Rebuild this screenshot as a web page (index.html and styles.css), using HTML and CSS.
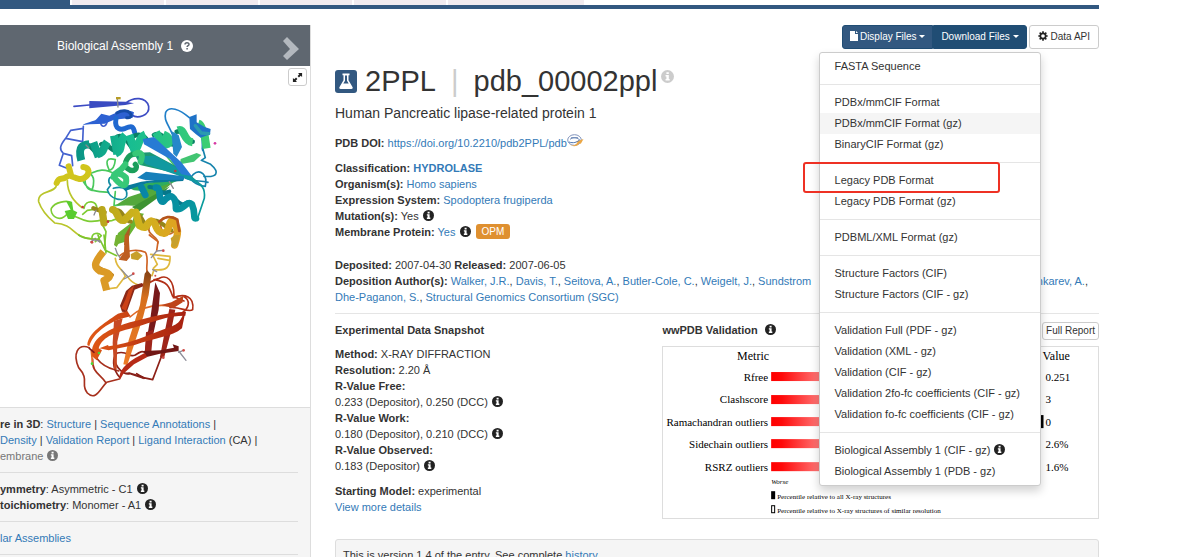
FILE: index.html
```html
<!DOCTYPE html>
<html lang="en">
<head>
    <meta charset="UTF-8">
    <meta name="viewport" content="width=device-width, initial-scale=1.0">
    <title>RCSB PDB - 2PPL: Human Pancreatic lipase-related protein 1</title>
    <link rel="stylesheet" href="styles.css">
</head>
<body>

<!-- shared icons -->
<svg class="sprite" aria-hidden="true">
    <symbol id="info" viewBox="0 0 12 12">
        <circle cx="6" cy="6" r="6" fill="currentColor"/>
        <path d="M5 2h2.200v1.700H5zM4.200 4.700h3v3.600h.8v1.400H4.200V8.300H5V6h-.8z" fill="#fff"/>
    </symbol>
</svg>

<header class="tabs">
    <span class="tab active"></span>
    <span class="tab"></span>
    <span class="tab"></span>
    <span class="tab"></span>
    <span class="tab"></span>
    <span class="tab wide"></span>
</header>

<div class="page">
    <aside class="sidebar">
        <div class="carousel-header">
            <span>Biological Assembly 1</span>
            <svg class="help" viewBox="0 0 12 12"><circle cx="6" cy="6" r="6" fill="#fff"/><path d="M4 4.600C4 2.200 8 2.200 8 4.400c0 1.300-1.900 1.300-1.900 2.600M6.100 8v1.500" fill="none" stroke="#5f6770" stroke-width="1.500"/></svg>
            <button class="next" aria-label="Next"><svg viewBox="0 0 16 24"><path d="M0 4l4-4 12 12L4 23l-4-4 7-7z" fill="#b3b8be"/></svg></button>
        </div>
        <div class="viewer">
            <button class="expand" aria-label="Expand"><svg viewBox="0 0 12 12"><path d="M6.500 1H11v4.500L9.500 4 7.600 5.900 6.100 4.400 8 2.500zM1 6.500L2.500 8l1.900-1.900 1.500 1.500L4 9.500 5.500 11H1z" fill="#222"/></svg></button>
            <svg class="protein" viewBox="0 66 310 341">
                <defs>
                    <linearGradient id="gHelix" x1="235" y1="0" x2="630" y2="0" gradientUnits="userSpaceOnUse"><stop offset="0" stop-color="#0a9485"/><stop offset=".4" stop-color="#18bd91"/><stop offset="1" stop-color="#3dce72"/></linearGradient>
                    <linearGradient id="gGold" x1="290" y1="0" x2="540" y2="0" gradientUnits="userSpaceOnUse"><stop offset="0" stop-color="#b6a51b"/><stop offset=".5" stop-color="#cdb31d"/><stop offset="1" stop-color="#e1a222"/></linearGradient>
                    <linearGradient id="gTeal" x1="420" y1="260" x2="600" y2="390" gradientUnits="userSpaceOnUse"><stop offset="0" stop-color="#0781a8"/><stop offset="1" stop-color="#07999d"/></linearGradient>
                    <linearGradient id="gRed" x1="260" y1="0" x2="560" y2="0" gradientUnits="userSpaceOnUse"><stop offset="0" stop-color="#e25b16"/><stop offset="1" stop-color="#a62011"/></linearGradient>
                    <linearGradient id="gOrange" x1="0" y1="120" x2="0" y2="390" gradientUnits="userSpaceOnUse"><stop offset="0" stop-color="#8d4615"/><stop offset=".25" stop-color="#d66f1d"/><stop offset="1" stop-color="#ed7a25"/></linearGradient>
                </defs>

                <!-- catalytic domain -->
                <g transform="translate(0 85) scale(.3333)" fill="none" stroke-linecap="round" stroke-linejoin="round">
                    <!-- thin loops -->
                    <g stroke-width="5">
                        <path stroke="#3d4cc4" d="M222 64L268 60M378 54C400 36 438 34 446 64C450 92 412 102 396 90"/>
                        <path stroke="#4462cf" d="M300 108C305 132 318 126 322 108M250 124L248 170L197 160L212 136L250 130M197 160C178 184 178 194 190 205L215 212L218 242M190 205L178 241L201 250"/>
                        <path stroke="#207fc9" d="M516 145C500 110 492 104 497 82C508 62 538 72 568 98M604 152C612 178 604 190 608 196"/>
                        <path stroke="#1583ac" d="M608 190L616 218L604 226L632 238C660 262 652 278 612 274M542 270C575 294 594 284 624 292M580 268C600 250 624 268 616 304C592 300 560 286 580 268"/>
                        <path stroke="#0a9b9c" d="M560 274C612 300 616 312 613 340L592 402"/>
                        <path stroke="#4ac85c" d="M346 268C300 240 282 266 258 270C250 292 260 314 276 316C282 300 286 272 268 266M250 290C270 326 300 318 326 322M328 256C316 230 318 216 346 224C344 244 340 254 328 256M480 190L530 250M346 320L342 362L374 358"/>
                        <path stroke="#128ca3" d="M346 280C322 268 324 292 332 300L322 314C330 346 374 352 380 332C384 306 360 304 340 310"/>
                        <path stroke="#b9c52b" d="M170 300C166 326 112 314 116 350C126 380 150 402 164 414C230 420 210 454 276 462M202 286C202 330 226 352 246 368"/>
                        <path stroke="#7dcc33" d="M204 384C176 420 148 386 154 370C164 352 202 344 214 354M210 390C240 394 248 420 312 404C342 416 338 398 350 404M252 370C256 342 294 346 290 372L262 376L248 388M276 462C274 444 296 440 304 452L286 470M306 416L318 440L314 480"/>
                        <path stroke="#c66a29" d="M480 408C510 386 540 396 534 424C512 462 480 450 482 412M448 424C438 452 476 452 474 474"/>
                    </g>

                    <!-- blue end -->
                    <path fill="#3a4bc2" d="M268 48L378 50L402 55L376 60L268 70z"/>
                    <path fill="#2d61d2" d="M248 120C270 108 286 110 292 100L304 86L328 92C356 78 382 70 402 82L398 98L342 104L314 116L270 118z"/>
                    <path stroke="#2069d0" stroke-width="15" d="M348 100C342 138 366 134 376 130C398 120 400 126 404 142"/>
                    <path stroke="#154ba6" stroke-width="9" d="M350 84C388 62 408 102 380 98"/>
                    <!-- long helix -->
                    <g stroke="#0b8066" stroke-width="14">
                        <path d="M252 178C274 174 280 206 302 208M304 178C320 170 330 196 348 198M352 155C382 145 388 192 410 200M398 155C424 140 440 160 444 172M462 150C484 138 498 168 516 178M530 140C552 134 556 166 578 170"/>
                    </g>
                    <g stroke="url(#gHelix)" stroke-width="24" stroke-linecap="butt">
                        <path d="M244 226C232 182 250 180 268 178M280 172L296 216M322 170C306 194 314 202 292 208M342 152L352 208M376 150C352 176 374 192 346 206M388 150L406 204M436 148C412 158 420 186 400 202M468 142L492 184M490 148C514 158 516 182 486 180M534 136C556 128 548 168 578 172M595 116C610 120 600 144 624 142M614 152L620 190"/>
                    </g>
                    <path fill="#1e72c7" d="M568 96L590 88L590 112L614 126L632 132L630 148L602 158L588 148L570 132z"/>
                    <path stroke="#2a9ab0" stroke-width="10" d="M586 122L604 144L626 146"/>
                    <!-- sheet -->
                    <path fill="#42c572" d="M542 222L590 204L604 210L582 230L540 238z"/>
                    <path fill="#2688ca" d="M514 138L536 150L546 186L530 216L520 206z"/>
                    <path fill="#1c9973" d="M402 204L450 202L506 232L562 262L604 300L540 268L420 240z"/>
                    <path fill="#1199a0" d="M416 214L466 212L560 264L610 302L530 270L438 238z"/>
                    <path fill="#277bd4" d="M428 162L462 156L544 232L576 274L544 268L510 222L432 178z"/>
                    <path fill="#2ead5c" d="M374 304L508 284L540 284L452 320L402 316z"/>
                    <path fill="#09799c" d="M366 306L424 290L550 274L550 288L442 294L376 318z"/>
                    <path fill="#177fba" d="M412 278L438 260L552 274L552 284L438 286z"/>
                    <path fill="#54a83c" d="M348 360L386 336L520 292L454 346L402 362z"/>
                    <path fill="#3d9332" d="M396 366L510 304L482 332L416 380z"/>
                    <path fill="#69b434" d="M344 480L354 444L396 412L406 382L432 386L376 470z"/>
                    <path fill="#a95f22" d="M372 480L376 448L392 420L384 480z"/>
                    <!-- middle helices -->
                    <path stroke="#1b9e5b" stroke-width="16" d="M404 208C386 206 366 238 382 250C402 266 416 248 406 238"/>
                    <path stroke="#38c877" stroke-width="18" d="M376 238C350 276 334 258 346 282C372 312 382 302 378 278C360 260 344 266 340 276M406 206C424 198 430 210 422 230"/>
                    <path stroke="#06778b" stroke-width="12" d="M448 306C478 304 474 330 508 320M492 324C528 326 536 374 562 352"/>
                    <path stroke="url(#gTeal)" stroke-width="20" d="M424 306L436 330M468 308C486 306 472 352 490 350C514 320 528 336 528 372C552 378 558 344 576 358C588 384 578 402 588 400"/>
                    <!-- yellow and gold helices -->
                    <path stroke="#d0c51c" stroke-width="18" d="M170 294C178 274 184 288 202 274M206 244L214 274C234 282 244 286 254 278C272 266 268 248 250 246"/>
                    <path fill="#59cc2f" d="M198 348L216 350L220 376L232 382L222 402L204 402L194 378L212 374z"/>
                    <path stroke="#95851a" stroke-width="13" d="M280 370L314 382M344 376C370 370 370 410 392 410M406 384C430 390 430 426 444 426M450 410C478 398 496 428 514 436"/>
                    <path stroke="url(#gGold)" stroke-width="22" d="M306 374L312 414M338 374C356 378 350 410 372 406L396 382M408 382L418 422C446 438 436 414 454 408C474 412 462 442 490 444C506 450 504 416 514 408C540 426 534 448 524 480"/>
                    <path stroke="#b5541b" stroke-width="8" d="M478 410C492 396 512 390 532 404L538 438"/>
                    <!-- residues -->
                    <g stroke="#88888e" stroke-width="4">
                        <path d="M352 40L354 66M258 180L266 188M288 376L282 390M274 470L286 460L300 472M508 290L520 310"/>
                    </g>
                    <g fill="#c43a3a"><circle cx="526" cy="258" r="4"/><circle cx="248" cy="366" r="4"/><circle cx="324" cy="410" r="4"/><circle cx="275" cy="471" r="4"/></g>
                    <path fill="#b79c25" d="M348 36h14v7h-14z"/>
                    <circle cx="645" cy="175" r="4" fill="#d73aa3"/>
                </g>

                <!-- C-terminal domain -->
                <g transform="translate(0 235) scale(.3333)" fill="none" stroke-linecap="round" stroke-linejoin="round">
                    <g stroke-width="5">
                        <path stroke="#7bc52f" d="M236 0C260 18 282 6 302 18L316 46L350 62M294 0L300 18M312 0L318 54"/>
                        <path stroke="#dfb83d" d="M346 70C350 104 370 100 376 124L350 158L320 162M382 124C396 146 410 148 420 152M452 58L510 64C512 96 500 108 462 104L456 122M458 60L472 88L460 100M474 70L508 76"/>
                        <path stroke="#cf6425" d="M360 62C380 42 420 44 436 52C448 68 436 100 442 112M448 0L474 20L470 48"/>
                        <path stroke="#b12f17" d="M418 150C450 150 456 134 478 130C500 118 522 134 522 182M462 134C504 140 508 156 518 184L552 198M520 188C554 174 584 184 578 224C566 234 540 214 510 218M550 184C574 196 566 220 548 232"/>
                        <path stroke="#a7301d" d="M268 338C232 324 218 358 236 398C270 436 240 446 262 474C288 500 302 458 320 442L358 432M278 372C274 414 306 420 318 444M290 370C316 404 344 402 356 408"/>
                        <path stroke="#8d2017" d="M360 428C334 400 338 366 352 354C386 346 384 370 406 360C430 344 426 352 438 352M344 366C344 400 374 420 388 416M430 428L458 434L486 360M410 416L432 430"/>
                        <path stroke="#e06a28" d="M390 246C420 218 458 208 502 212M274 348L278 388"/>
                    </g>

                    <!-- links above the barrel -->
                    <path fill="#bd5d20" d="M374 0L386 0L390 66L380 78L356 74L372 52z"/>
                    <path fill="#74b233" d="M348 0L370 0L350 36L342 30z"/>
                    <path stroke="#bb7d19" stroke-width="12" d="M288 94L336 120"/>
                    <path stroke="#db9a25" stroke-width="22" stroke-linecap="butt" d="M310 50C282 84 280 96 300 108C338 114 334 128 312 136L320 166"/>
                    <path fill="#c7a02b" d="M392 58L410 48L428 62L414 76L394 72zM512 10L524 0L540 0L532 32L518 38z"/>

                    <!-- back strands -->
                    <path fill="#78191a" d="M466 142L480 174L476 224L452 332L440 366L434 350L452 244z"/>
                    <path fill="#9f251a" d="M438 292L460 284L454 350L434 360zM508 222L526 224L512 294L492 370L480 366L494 292z"/>
                    <path fill="#c74924" d="M342 258L368 250L352 320L350 404L342 402L338 324z"/>
                    <path fill="url(#gOrange)" d="M434 116L442 106L454 120L446 180L430 244L402 330L382 390L370 388L386 316L420 210z"/>
                    <path fill="#8b2917" d="M366 230L360 212L378 168L396 152L426 144L430 154L404 164L380 232z"/>
                    <path fill="#cb4117" d="M364 220L376 194L386 166L402 152L378 228z"/>
                    <!-- front strands -->
                    <path fill="url(#gRed)" d="M262 330C264 294 310 266 354 236L382 228L392 244L368 250C320 264 278 298 268 334z"/>
                    <path fill="url(#gRed)" d="M276 344C284 300 340 278 390 262C450 246 496 234 558 230L556 242C500 242 456 262 408 276C350 292 308 302 296 340L306 346L290 376L276 364z"/>
                    <path fill="url(#gRed)" d="M298 340L324 330L326 334C390 326 444 300 510 276C548 264 540 246 556 232L546 280C516 306 464 308 404 330L326 346z"/>
                    <path fill="#be4319" d="M484 210L514 202L550 182L548 202L520 220z"/>
                    <path fill="#721715" d="M430 348L482 346L522 338L518 328L536 334L536 348L480 356L440 366z"/>
                    <path fill="#b72a17" d="M360 434C352 400 398 372 434 354L442 366L402 388L370 416z"/>
                    <path fill="#872019" d="M368 414L388 412L430 424L430 432L388 418z"/>
                    <path stroke="#82191a" stroke-width="5" d="M268 340L282 352"/>

                    <!-- residues -->
                    <g stroke="#8d8d98" stroke-width="4">
                        <path d="M346 40L352 56L360 68M364 104L384 126L398 118M384 126L372 132M454 68L470 48L490 46M458 104L470 110M536 348L558 376M536 352L550 346M276 14L300 18"/>
                    </g>
                    <g fill="#d04c48"><circle cx="400" cy="116" r="4"/><circle cx="490" cy="47" r="4"/><circle cx="466" cy="122" r="3"/><circle cx="551" cy="346" r="4"/><circle cx="276" cy="22" r="4"/><circle cx="490" cy="368" r="4"/></g>
                    <circle cx="297" cy="354" r="4" fill="#44dc37"/>
                    <circle cx="276" cy="386" r="4" fill="#44dc37"/>
                </g>
            </svg>
        </div>
        <div class="side-info">
            <div class="side-block">
                <b>re in 3D</b>: <a href="#">Structure</a> | <a href="#">Sequence Annotations</a> |<br>
                <a href="#">Density</a> | <a href="#">Validation Report</a> | <a href="#">Ligand Interaction</a> (CA) |<br>
                <span class="muted">embrane <svg class="info"><use href="#info"/></svg></span>
            </div>
            <div class="side-block">
                <b>ymmetry</b>: Asymmetric - C1 <svg class="info"><use href="#info"/></svg><br>
                <b>toichiometry</b>: Monomer - A1 <svg class="info"><use href="#info"/></svg>
            </div>
            <div class="side-block"><a href="#">lar Assemblies</a></div>
        </div>
    </aside>

    <main class="entry">
        <div class="toolbar">
            <div class="btn-group">
                <button class="btn btn-primary"><svg class="file-icon" viewBox="0 0 8 10"><path d="M0 0h5v3h3v7H0zM6 0l2 2H6z" fill="#fff"/></svg>Display Files <i class="caret"></i></button>
                <button class="btn btn-primary open">Download Files <i class="caret"></i></button>
                <ul class="menu">
                    <li><a href="#">FASTA Sequence</a></li>
                    <li class="divider"></li>
                    <li><a href="#">PDBx/mmCIF Format</a></li>
                    <li class="hover"><a href="#">PDBx/mmCIF Format (gz)</a></li>
                    <li><a href="#">BinaryCIF Format (gz)</a></li>
                    <li class="divider"></li>
                    <li class="marked"><a href="#">Legacy PDB Format</a></li>
                    <li><a href="#">Legacy PDB Format (gz)</a></li>
                    <li class="divider"></li>
                    <li><a href="#">PDBML/XML Format (gz)</a></li>
                    <li class="divider"></li>
                    <li><a href="#">Structure Factors (CIF)</a></li>
                    <li><a href="#">Structure Factors (CIF - gz)</a></li>
                    <li class="divider"></li>
                    <li><a href="#">Validation Full (PDF - gz)</a></li>
                    <li><a href="#">Validation (XML - gz)</a></li>
                    <li><a href="#">Validation (CIF - gz)</a></li>
                    <li><a href="#">Validation 2fo-fc coefficients (CIF - gz)</a></li>
                    <li><a href="#">Validation fo-fc coefficients (CIF - gz)</a></li>
                    <li class="divider"></li>
                    <li><a href="#">Biological Assembly 1 (CIF - gz) <svg class="info"><use href="#info"/></svg></a></li>
                    <li><a href="#">Biological Assembly 1 (PDB - gz)</a></li>
                </ul>
            </div>
            <button class="btn btn-default"><svg class="gear" viewBox="0 0 12 12"><circle cx="6" cy="6" r="3.200" fill="none" stroke="#222" stroke-width="2"/><path d="M6 .4v2.200M6 9.400v2.200M.4 6h2.200M9.400 6h2.200M2 2l1.600 1.600M8.400 8.400L10 10M10 2L8.400 3.600M3.600 8.400L2 10" stroke="#222" stroke-width="2"/></svg>Data API</button>
        </div>

        <h1>
            <svg class="flask" viewBox="0 0 22 23"><rect width="22" height="23" rx="3" fill="#325880"/><path d="M7.500 3.500h7v1.700h-1v5l4 6.800c.6 1.200 0 2-1.200 2H5.700c-1.200 0-1.800-.8-1.200-2l4-6.800v-5h-1z" fill="#fff"/><path d="M10 5.500v5.200L8.300 13.500h5.400L12 10.700V5.500z" fill="#325880"/></svg>
            <span>2PPL</span>
            <span class="bar">|</span>
            <span>pdb_00002ppl</span>
            <svg class="info"><use href="#info"/></svg>
        </h1>
        <h4>Human Pancreatic lipase-related protein 1</h4>

        <p class="doi"><b>PDB DOI:</b> <a href="#">https://doi.org/10.2210/pdb2PPL/pdb</a><svg class="doi-icon" viewBox="0 0 17 13"><ellipse cx="7.500" cy="6" rx="6.800" ry="5.300" fill="#fff" stroke="#8295bd"/><path d="M3 5.500c2-2.500 7-2.500 9 0M4 3.800h7" fill="none" stroke="#6985b5"/><path d="M2 9.500c3 3.500 7 1.500 8.500-1L9 7.500 16.500 5l-2.800 5-1-1C10 13 5 13.500 2 9.500z" fill="#eba746"/><path d="M2 8c4 1.500 8 .5 11-2.500" fill="none" stroke="#4a73b0"/></svg></p>

        <p>
            <b>Classification:</b> <a href="#"><b>HYDROLASE</b></a><br>
            <b>Organism(s):</b> <a href="#">Homo sapiens</a><br>
            <b>Expression System:</b> <a href="#">Spodoptera frugiperda</a><br>
            <b>Mutation(s):</b> Yes <svg class="info"><use href="#info"/></svg><br>
            <b>Membrane Protein:</b> <a href="#">Yes</a> <svg class="info"><use href="#info"/></svg> <a href="#" class="label">OPM</a>
        </p>

        <div class="deposition">
            <div><b>Deposited:</b> 2007-04-30 <b>Released:</b> 2007-06-05</div>
            <div class="authors">
                <span><b>Deposition Author(s):</b> <a href="#">Walker, J.R.</a>, <a href="#">Davis, T.</a>, <a href="#">Seitova, A.</a>, <a href="#">Butler-Cole, C.</a>, <a href="#">Weigelt, J.</a>, <a href="#">Sundstrom</a></span>
                <span><a href="#">Bochkarev, A.</a>,</span>
            </div>
            <div><a href="#">Dhe-Paganon, S.</a>, <a href="#">Structural Genomics Consortium (SGC)</a></div>
        </div>

        <div class="columns">
            <section>
                <h5>Experimental Data Snapshot</h5>
                <p>
                    <b>Method:</b> X-RAY DIFFRACTION<br>
                    <b>Resolution:</b> 2.20 Å<br>
                    <b>R-Value Free:</b><br>
                    0.233 (Depositor), 0.250 (DCC) <svg class="info"><use href="#info"/></svg><br>
                    <b>R-Value Work:</b><br>
                    0.180 (Depositor), 0.210 (DCC) <svg class="info"><use href="#info"/></svg><br>
                    <b>R-Value Observed:</b><br>
                    0.183 (Depositor) <svg class="info"><use href="#info"/></svg>
                </p>
                <p>
                    <b>Starting Model:</b> experimental<br>
                    <a href="#">View more details</a>
                </p>
            </section>
            <section>
                <div class="validation-head">
                    <h5>wwPDB Validation <svg class="info"><use href="#info"/></svg></h5>
                    <button class="btn btn-default btn-small">Full Report</button>
                </div>
                <!-- percentile sliders -->
                <svg class="sliders" viewBox="0 0 434 171">
                    <defs>
                        <linearGradient id="slider"><stop offset="0" stop-color="#f00"/><stop offset=".04" stop-color="#ff0a0a"/><stop offset=".18" stop-color="#ff7474"/><stop offset=".5" stop-color="#fff"/><stop offset="1" stop-color="#00f"/></linearGradient>
                    </defs>
                    <g class="head"><text x="74" y="13">Metric</text><text x="379" y="13">Value</text></g>
                    <g fill="url(#slider)">
                        <rect x="108" y="25" width="264" height="9"/>
                        <rect x="108" y="48" width="264" height="9"/>
                        <rect x="108" y="70" width="264" height="9"/>
                        <rect x="108" y="92" width="264" height="9"/>
                        <rect x="108" y="115" width="264" height="9"/>
                    </g>
                    <rect x="376" y="68" width="4" height="13"/>
                    <g text-anchor="end">
                        <text x="105" y="34">Rfree</text>
                        <text x="105" y="56">Clashscore</text>
                        <text x="105" y="79">Ramachandran outliers</text>
                        <text x="105" y="101">Sidechain outliers</text>
                        <text x="105" y="124">RSRZ outliers</text>
                    </g>
                    <g>
                        <text x="382" y="34">0.251</text>
                        <text x="382" y="56">3</text>
                        <text x="382" y="79">0</text>
                        <text x="382" y="101">2.6%</text>
                        <text x="382" y="124">1.6%</text>
                    </g>
                    <g class="legend">
                        <text x="108" y="137" font-style="italic">Worse</text>
                        <rect x="108" y="144" width="4" height="8"/>
                        <text x="114" y="152">Percentile relative to all X-ray structures</text>
                        <rect x="108.500" y="158.500" width="3" height="7" fill="#fff" stroke="#000"/>
                        <text x="114" y="166">Percentile relative to X-ray structures of similar resolution</text>
                    </g>
                </svg>
            </section>
        </div>

        <div class="well">This is version 1.4 of the entry. See complete <a href="#">history</a>.</div>
    </main>
</div>

</body>
</html>
```
FILE: styles.css
```css
*,
*::after {
    box-sizing: border-box;
}

body {
    margin: 0;
    height: 100vh;
    overflow: hidden;
    font-family: "Liberation Sans", Arial, sans-serif;
    font-size: 11px;
    line-height: 16px;
    color: #333;
    background-color: #fff;
}

a {
    color: #337ab7;
    text-decoration: none;
}

p {
    margin: 0 0 9px;
}

button {
    font-family: inherit;
    cursor: pointer;
}

.sprite {
    display: none;
}

.info {
    width: 11px;
    height: 11px;
    margin-left: 1px;
    color: #222;
    vertical-align: -1px;
}

/* top tabs */
.tabs {
    display: flex;
    gap: 2px;
    height: 9px;
    margin-right: 93px;
    border-bottom: 4px solid #325880;
}

.tab {
    width: 92px;
    background-color: #f1ebef;
}

.tab.active {
    width: 70px;
    background-color: #325880;
}

.tab.wide {
    width: 136px;
}

.page {
    display: flex;
    align-items: flex-start;
    margin: 16px 93px 0 0;
}

/* left panel */
.sidebar {
    flex: 0 0 311px;
    border-right: 1px solid #ddd;
}

.carousel-header {
    display: flex;
    align-items: center;
    height: 41px;
    padding: 0 11px 0 57px;
    background-color: #5f6770;
    color: #fff;
    font-size: 12px;
}

.help {
    width: 12px;
    height: 12px;
    margin-left: 8px;
}

.next {
    width: 16px;
    height: 24px;
    margin: 7px 0 0 auto;
    padding: 0;
    border: 0;
    background: none;
}

.viewer {
    position: relative;
}

.protein {
    display: block;
    width: 100%;
}

.expand {
    position: absolute;
    top: 2px;
    right: 3px;
    width: 19px;
    height: 18px;
    padding: 2px 3px;
    border: 1px solid #ccc;
    border-radius: 3px;
    background-color: #fff;
}

.expand svg,
.next svg {
    display: block;
}

.side-info {
    padding: 8px 12px 20px 0;
    border-top: 1px solid #ddd;
    background-color: #f5f5f5;
}

.side-block {
    padding-bottom: 8px;
    margin-bottom: 8px;
    border-bottom: 1px solid #ddd;
    white-space: nowrap;
}

.muted,
.muted .info {
    color: #777;
}

/* entry */
.entry {
    flex: 1;
    min-width: 0;
    padding-left: 24px;
}

.toolbar {
    display: flex;
    justify-content: flex-end;
    gap: 2px;
}

.btn-group {
    position: relative;
    display: flex;
}

.btn {
    height: 24px;
    padding: 0 8px;
    border: 1px solid #ccc;
    border-radius: 3px;
    font-size: 10px;
    line-height: 16px;
    white-space: nowrap;
}

.btn-default {
    background-color: #fff;
    color: #333;
}

.btn-primary {
    padding: 0 7px;
    border-color: #204d74;
    border-radius: 3px 0 0 3px;
    background-color: #325880;
    color: #fff;
}

.btn-primary.open {
    border-radius: 0 3px 3px 0;
    background-color: #204d74;
}

.btn-small {
    height: 18px;
    padding: 0 3px;
}

.file-icon {
    width: 8px;
    height: 10px;
    margin-right: 2px;
    vertical-align: -1px;
}

.gear {
    width: 10px;
    height: 10px;
    margin-right: 3px;
    vertical-align: -1px;
}

.caret {
    display: inline-block;
    border-top: 3px solid;
    border-left: 3px solid transparent;
    border-right: 3px solid transparent;
    vertical-align: 2px;
}

.menu {
    position: absolute;
    z-index: 10;
    top: 27px;
    right: -14px;
    width: 222px;
    margin: 0;
    padding: 3px 0;
    list-style: none;
    background-color: #fff;
    border: 1px solid #ccc;
    border-radius: 3px;
    box-shadow: 0 5px 10px rgba(0, 0, 0, 0.18);
}

.menu a {
    display: block;
    padding: 0 15px;
    line-height: 21px;
    color: #333;
}

.menu .hover {
    background-color: #f5f5f5;
}

.menu .divider {
    height: 1px;
    margin: 7px 0;
    background-color: #e5e5e5;
}

.marked {
    position: relative;
}

/* red frame round the legacy format */
.marked::after {
    content: "";
    position: absolute;
    top: -8px;
    left: -17px;
    width: 197px;
    height: 31px;
    border: 2px solid #ee3124;
    border-radius: 3px;
    pointer-events: none;
}

h1 {
    display: flex;
    align-items: center;
    height: 32px;
    margin: 16px 0 8px;
    font-size: 29px;
    line-height: 32px;
    font-weight: normal;
}

h1 .flask {
    width: 22px;
    height: 23px;
    margin-right: 8px;
}

h1 .bar {
    margin: 0 15px;
    color: #ccc;
}

h1 .info {
    width: 13px;
    height: 13px;
    margin: 0 0 10px 4px;
    color: #ccc;
}

h4 {
    margin: 0 0 14px;
    font-size: 14px;
    font-weight: normal;
}

h5 {
    margin: 0 0 8px;
    font-size: 11px;
    line-height: 16px;
}

.doi-icon {
    width: 17px;
    height: 13px;
    margin-top: -4px;
    vertical-align: 0;
}

.label {
    display: inline-block;
    height: 15px;
    margin-left: 2px;
    padding: 0 6px;
    border-radius: 3px;
    background-color: #df9030;
    color: #fff;
    font-size: 10px;
    line-height: 15px;
    vertical-align: top;
}

.deposition {
    margin-top: 17px;
    padding-bottom: 8px;
    border-bottom: 1px solid #e5e5e5;
}

.authors {
    display: flex;
    justify-content: space-between;
    padding-right: 11px;
    white-space: nowrap;
}

.columns {
    display: grid;
    grid-template-columns: 3fr 4fr;
    padding-top: 8px;
}

.validation-head {
    display: flex;
    justify-content: space-between;
    align-items: flex-start;
    height: 24px;
}

.validation-head .info {
    margin-left: 4px;
}

.sliders {
    display: block;
    width: 100%;
    border: 1px solid #ddd;
    font-family: "Liberation Serif", "Times New Roman", serif;
    font-size: 11px;
}

.sliders .head {
    font-size: 12px;
}

.sliders .legend {
    font-size: 7px;
}

.well {
    margin-top: 15px;
    padding: 7px;
    border: 1px solid #ddd;
    border-radius: 3px;
    background-color: #f5f5f5;
}
```
